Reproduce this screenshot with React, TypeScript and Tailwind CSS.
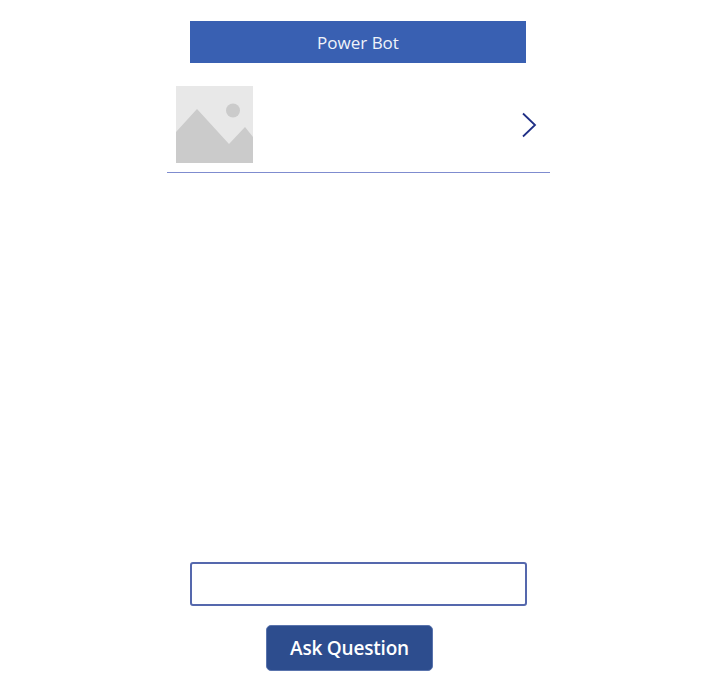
export default function App() {
  return (
    <div className="w-[716px] h-[678px] bg-white flex flex-col items-center pt-[21px] overflow-hidden" style={{ fontFamily: '"Open Sans", "Noto Sans", sans-serif' }}>
      <div className="w-[336px] h-[42px] bg-[#3960b2] flex items-center justify-center text-[#f0f3fa] text-[17px] pt-[1px]">Power Bot</div>
      <div className="w-[383px] h-[110px] box-border flex items-start justify-between border-b border-[#7f8ccf] pl-[9px] pr-[13px] pt-[23px]">
        <svg width="77" height="77" viewBox="0 0 77 77" className="block">
          <rect width="77" height="77" fill="#e8e8e8" />
          <circle cx="57" cy="24.5" r="7" fill="#cbcbcb" />
          <path d="M0 46 L21 23 L53 58 L69 41 L77 51 L77 77 L0 77 Z" fill="#cbcbcb" />
        </svg>
        <svg width="16" height="26" viewBox="0 0 16 26" className="mt-[26px]" fill="none">
          <path d="M2 1.5 L14 13 L2 24.5" stroke="#1f2f86" strokeWidth="1.8" />
        </svg>
      </div>
      <div className="flex-1" />
      <div className="w-[337px] h-[44px] rounded-[3px] border-2 border-[#5568ad] bg-white" />
      <button className="self-start ml-[266px] mt-[19px] mb-[7px] w-[167px] h-[46px] rounded-[5px] bg-[#2d4d8e] border border-[#5a74ad] text-white text-[19px] tracking-[-0.2px] font-semibold flex items-center justify-center">Ask Question</button>
    </div>
  );
}
